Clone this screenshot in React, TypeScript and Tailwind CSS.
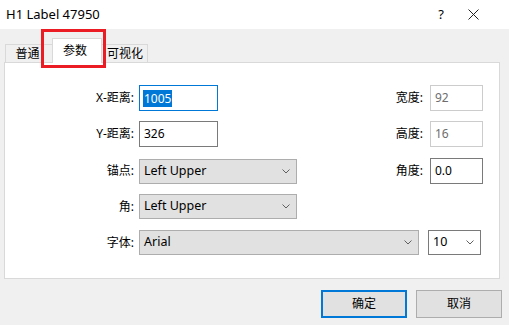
import React from "react";

const font = {
  fontFamily: '"Segoe UI", "Noto Sans", "Noto Sans CJK SC", sans-serif',
};

function Chevron() {
  return (
    <svg width="8" height="5" viewBox="0 0 8 5" className="shrink-0">
      <path d="M0.5 0.5 L4 4 L7.5 0.5" fill="none" stroke="#606060" strokeWidth="1" />
    </svg>
  );
}

function Label({ text, w }: { text: string; w: string }) {
  return <div className={`${w} text-right text-[12px] text-black pr-[5px] shrink-0`}>{text}</div>;
}

export default function App() {
  return (
    <div
      className="w-[509px] h-[325px] bg-[#f0f0f0] flex flex-col relative overflow-hidden text-[12px] text-black"
      style={font}
    >
      {/* Title bar */}
      <div className="h-[29px] bg-white flex items-center shrink-0">
        <div className="pl-[6px] text-[13px] leading-none flex-1">H1 Label 47950</div>
        <div className="w-[20px] text-center text-[13px] leading-none mr-[17px]">?</div>
        <svg width="11" height="11" viewBox="0 0 11 11" className="mr-[30px]">
          <path d="M0.5 0.5 L10.5 10.5 M10.5 0.5 L0.5 10.5" stroke="#222" strokeWidth="1" />
        </svg>
      </div>

      {/* Tabs */}
      <div className="pl-[5px] pt-[8px] flex items-end h-[33px] shrink-0 relative z-10">
        <div className="w-[48px] h-[18px] border border-b-0 border-[#d9d9d9] bg-[#f0f0f0] flex items-center justify-center text-[12px] pt-[1px] pr-[3px]">
          普通
        </div>
        <div className="w-[50px] h-[25px] -ml-[1px] border border-b-0 border-[#d9d9d9] bg-white flex items-start justify-center pt-[3px] pr-[4px] text-[12px] translate-y-[1px]">
          参数
        </div>
        <div className="w-[47px] h-[18px] -ml-[1px] border border-b-0 border-l-0 border-[#d9d9d9] bg-[#f0f0f0] flex items-center justify-center text-[12px] pt-[1px] pl-[2px]">
          可视化
        </div>
      </div>

      {/* Red highlight */}
      <div className="absolute left-[41px] top-[29px] w-[65px] h-[39px] border-[3px] border-[#ec1c24] z-20 pointer-events-none" />

      {/* Panel */}
      <div className="ml-[4px] w-[496px] h-[217px] bg-white border border-[#d9d9d9] shrink-0 pt-[22px]">
        {/* Row 1 */}
        <div className="flex items-center h-[26px]">
          <Label text="X-距离:" w="w-[134px]" />
          <div className="w-[79px] h-[26px] border border-[#0078d7] flex items-center pl-[3px]">
            <span className="bg-[#0078d7] text-white leading-[17px] px-[1px]">1005</span>
          </div>
          <Label text="宽度:" w="w-[210px]" />
          <div className="ml-[2px] w-[53px] h-[26px] border border-[#cccccc] flex items-center pl-[4px] text-[#6d6d6d]">92</div>
        </div>
        {/* Row 2 */}
        <div className="flex items-center h-[26px] mt-[10px]">
          <Label text="Y-距离:" w="w-[134px]" />
          <div className="w-[79px] h-[26px] border border-[#7a7a7a] flex items-center pl-[4px]">326</div>
          <Label text="高度:" w="w-[210px]" />
          <div className="ml-[2px] w-[53px] h-[26px] border border-[#cccccc] flex items-center pl-[4px] text-[#6d6d6d]">16</div>
        </div>
        {/* Row 3 */}
        <div className="flex items-center h-[26px] mt-[11px]">
          <Label text="锚点:" w="w-[134px]" />
          <div className="w-[158px] h-[25px] border border-[#adadad] bg-[#e1e1e1] flex items-center pl-[4px] pr-[6px] justify-between text-[12.5px]">
            <span>Left Upper</span>
            <Chevron />
          </div>
          <Label text="角度:" w="w-[131px]" />
          <div className="ml-[2px] w-[53px] h-[26px] border border-[#7a7a7a] flex items-center pl-[4px]">0.0</div>
        </div>
        {/* Row 4 */}
        <div className="flex items-center h-[25px] mt-[10px]">
          <Label text="角:" w="w-[134px]" />
          <div className="w-[158px] h-[25px] border border-[#adadad] bg-[#e1e1e1] flex items-center pl-[4px] pr-[6px] justify-between text-[12.5px]">
            <span>Left Upper</span>
            <Chevron />
          </div>
        </div>
        {/* Row 5 */}
        <div className="flex items-center h-[25px] mt-[11px]">
          <Label text="字体:" w="w-[134px]" />
          <div className="w-[280px] h-[25px] border border-[#adadad] bg-[#e1e1e1] flex items-center pl-[4px] pr-[6px] justify-between text-[12.5px]">
            <span>Arial</span>
            <Chevron />
          </div>
          <div className="ml-[9px] w-[53px] h-[25px] border border-[#7a7a7a] bg-white flex items-center pl-[4px] pr-[6px] justify-between text-[12.5px]">
            <span>10</span>
            <Chevron />
          </div>
        </div>
      </div>

      {/* Buttons */}
      <div className="flex justify-end gap-[9px] pr-[7px] mt-[11px]">
        <div className="w-[86px] h-[28px] border-2 border-[#0078d7] bg-[#e1e1e1] flex items-center justify-center">确定</div>
        <div className="w-[86px] h-[28px] border border-[#adadad] bg-[#e1e1e1] flex items-center justify-center">取消</div>
      </div>
    </div>
  );
}
